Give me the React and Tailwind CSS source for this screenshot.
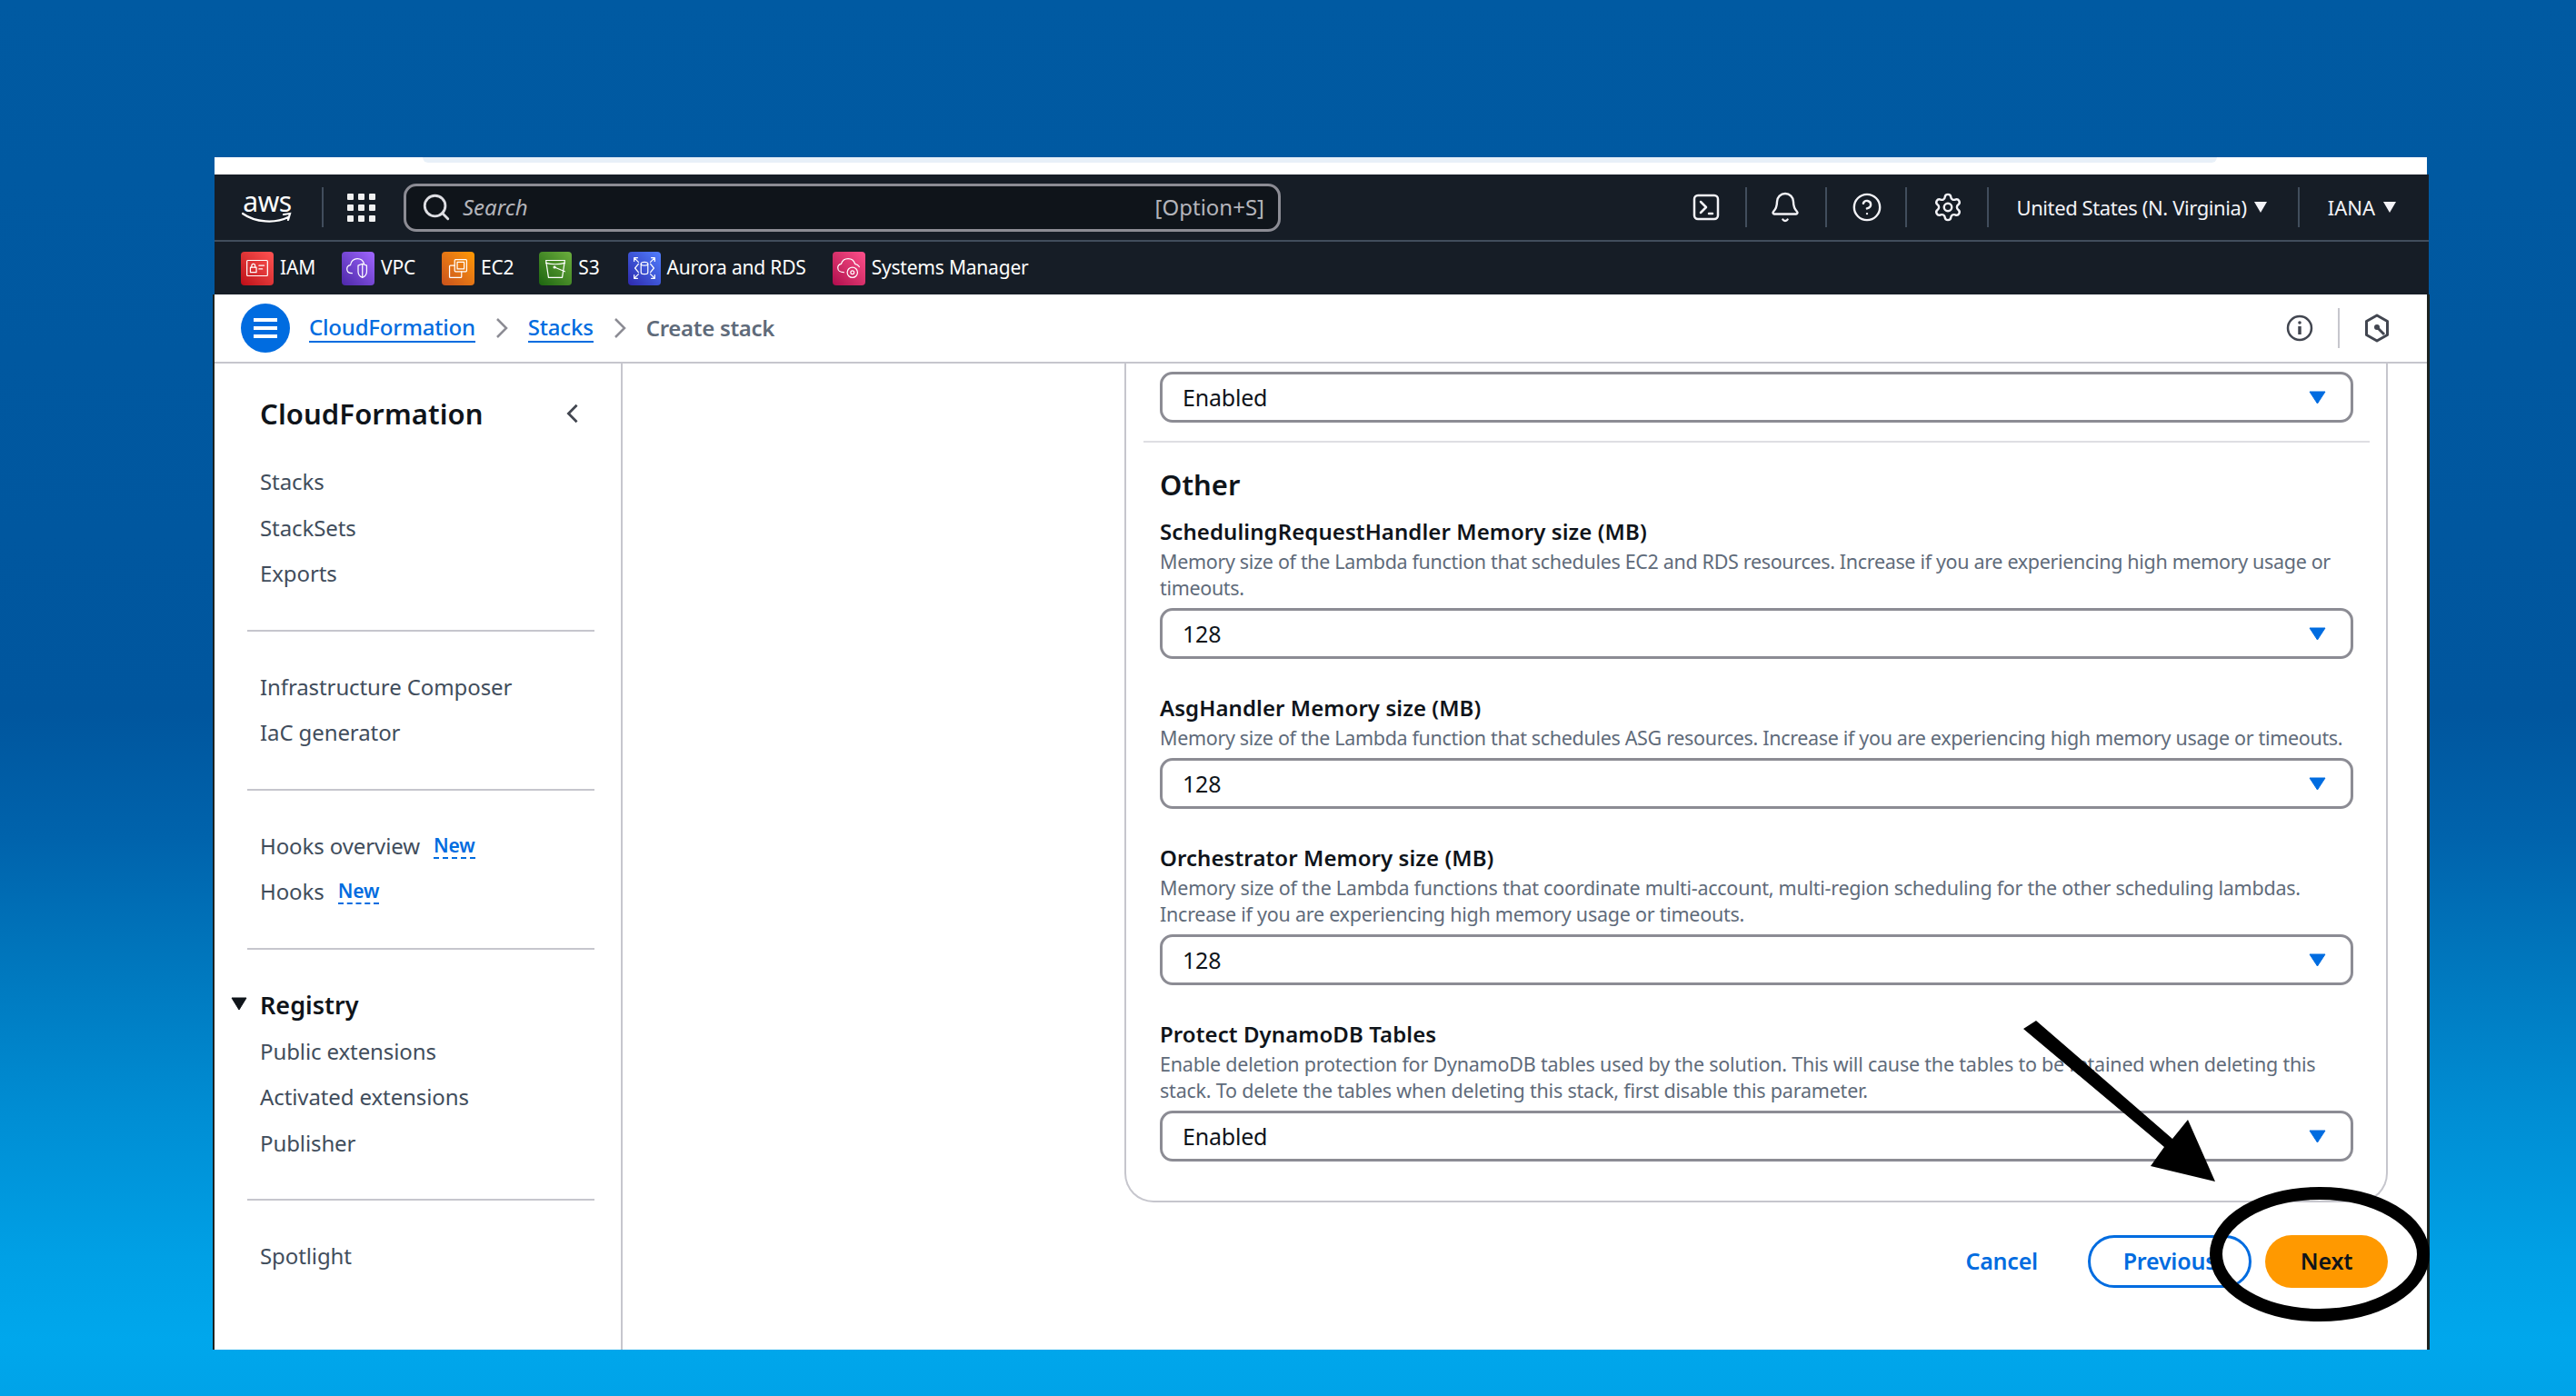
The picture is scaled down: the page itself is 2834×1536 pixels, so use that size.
import { Search, Bell, CircleHelp, Settings } from 'lucide-react';

const services = [
  { name: 'IAM', tile: 'from-[#bd0816] to-[#ff5252]', ml: 'ml-0', icon: 'iam' },
  { name: 'VPC', tile: 'from-[#4d27a8] to-[#a166ff]', ml: 'ml-[29px]', icon: 'vpc' },
  { name: 'EC2', tile: 'from-[#c8511b] to-[#ff9900]', ml: 'ml-[29px]', icon: 'ec2' },
  { name: 'S3', tile: 'from-[#1b660f] to-[#6cae3e]', ml: 'ml-[28px]', icon: 's3' },
  { name: 'Aurora and RDS', tile: 'from-[#2e27ad] to-[#527fff]', ml: 'ml-[31px]', icon: 'rds' },
  { name: 'Systems Manager', tile: 'from-[#b0084d] to-[#ff4f8b]', ml: 'ml-[29px]', icon: 'ssm' },
];

const TileIcon = ({ type }) => {
  const common = { fill: 'none', stroke: 'white', strokeWidth: 1.3, strokeLinejoin: 'round', strokeLinecap: 'round' };
  return (
    <svg viewBox="0 0 36 36" className="w-[34px] h-[34px]" {...common}>
      {type === 'iam' && (
        <>
          <rect x="6" y="9" width="24" height="18" rx="1" />
          <rect x="10" y="17" width="7" height="6" />
          <path d="M11.5 17v-2a2 2 0 0 1 4 0v2M20 15h6M20 19h4" />
        </>
      )}
      {type === 'vpc' && (
        <>
          <path d="M11 24c-4 0-6-2-6-5 0-2.500 1.500-4 4-4.500C9.500 10 13 7 17 7c4 0 7 2.500 8 6" />
          <path d="M18 15l5-2 5 2v7c0 4-2.500 6-5 7-2.500-1-5-3-5-7z" />
          <path d="M23 14v14" />
        </>
      )}
      {type === 'ec2' && (
        <>
          <rect x="14" y="8" width="14" height="14" rx="1" />
          <rect x="17" y="11" width="8" height="8" />
          <path d="M14 15H9a1 1 0 0 0-1 1v12a1 1 0 0 0 1 1h12a1 1 0 0 0 1-1v-6" />
        </>
      )}
      {type === 's3' && (
        <>
          <path d="M7 9h22l-3 20H10z" />
          <path d="M7 12c6 2 16 2 22 0" />
          <circle cx="17" cy="17" r="1" fill="white" />
          <path d="M17 17l12 5" />
        </>
      )}
      {type === 'rds' && (
        <>
          <ellipse cx="18" cy="13" rx="4" ry="2" />
          <path d="M14 13v10c0 1.200 2 2 4 2s4-.8 4-2V13" />
          <path d="M11 13l-4 5 4 5M25 13l4 5-4 5M6 6l5 5M6 6h4M6 6v4M30 6l-5 5M30 6h-4M30 6v4M6 30l5-5M6 30h4M6 30v-4M30 30l-5-5M30 30h-4M30 30v-4" />
        </>
      )}
      {type === 'ssm' && (
        <>
          <path d="M12 23c-4 0-7-2-7-5.500 0-2.500 1.500-4 4-4.500C10 9.500 13 7 17 7c4 0 7 2.500 8 6 2 .3 4 1.500 5 3.500" />
          <circle cx="22" cy="23" r="6" />
          <circle cx="22" cy="23" r="2" />
        </>
      )}
    </svg>
  );
};

const VDivider = ({ h = 'h-[44px]', color = 'bg-[#414d5c]' }) => <div className={`w-[2px] ${h} ${color}`} />;

const Caret = () => (
  <svg viewBox="0 0 19 14" className="w-[19px] h-[14px]">
    <path d="M1 1h17l-8.500 13z" fill="#006ce0" stroke="#006ce0" strokeLinejoin="round" />
  </svg>
);

const Select = ({ value }) => (
  <div className="flex items-center justify-between h-[56px] border-[3px] border-[#8c8c94] rounded-[14px] pl-[22px] pr-[27px]">
    <span className="text-[25px] leading-none text-[#0f141a] tracking-[-0.2px]">{value}</span>
    <Caret />
  </div>
);

const Field = ({ label, desc, value, track = 'tracking-[-0.33px]' }) => (
  <div className="mt-[38px] first:mt-0">
    <div className="h-[32px] leading-[32px] text-[24px] font-semibold text-[#0f141a] tracking-[0.08px]">{label}</div>
    <div className={`mt-[2px] mb-[8px] text-[21.5px] leading-[29px] text-[#5f6b7a] whitespace-nowrap ${track}`}>{desc}</div>
    <Select value={value} />
  </div>
);

const NavItem = ({ children }) => (
  <div className="flex items-center h-[50.5px] text-[24px] text-[#414d5c] tracking-[-0.1px]">{children}</div>
);

const NewBadge = () => (
  <span className="ml-[15px] text-[21px] font-semibold leading-[26px] text-[#006ce0] border-b-2 border-dashed border-[#006ce0]">New</span>
);

const SideRule = () => <div className="my-[36px] ml-[36px] mr-[29px] h-[2px] bg-[#c6c6cd]" />;

const Crumb = ({ children }) => (
  <span className="text-[24px] leading-[30px] font-medium text-[#006ce0] border-b-2 border-[#006ce0] tracking-[-0.2px]">{children}</span>
);

const CrumbChevron = () => (
  <svg viewBox="0 0 14 24" className="w-[14px] h-[24px] mx-[22px]" fill="none" stroke="#8c8c94" strokeWidth="2.500">
    <path d="M2 2l10 10L2 22" />
  </svg>
);

const App = () => {
  return (
    <div className="relative w-[2834px] h-[1536px] overflow-hidden pt-[173px] pl-[234px] bg-[linear-gradient(180deg,#005aa2_0%,#00569e_51%,#0063ac_60%,#0079bf_70%,#008ed4_80%,#00a0e5_90%,#00a7ec_96%,#00a3e8_100%)] font-['Noto_Sans',sans-serif]">
      <div className="flex flex-col w-[2439px] h-[1312px]">
        {/* Strip above the console */}
        <div className="h-[19px] ml-[2px] mr-[3px] bg-white">
          <div className="ml-[229px] mr-[231px] h-[6px] bg-[#e8f0f8] rounded-bl-[6px] rounded-br-[6px]" />
        </div>

        {/* Top nav */}
        <div className="bg-[#161d26] ml-[2px] mr-[1px]">
          <div className="flex items-center h-[74px] border-b-2 border-[#414d5c] pl-[30px] pr-[36px]">
            <div className="relative w-[56px] h-[36px] text-white">
              <span className="block text-[30px] leading-[24px] text-center tracking-[-0.5px]">aws</span>
              <svg viewBox="0 0 56 14" className="absolute left-0 bottom-0 w-[56px] h-[14px]" fill="none" stroke="white" strokeWidth="2.200" strokeLinecap="round">
                <path d="M1 3c14 10 36 11 50 4M46 4l7-1-2 7" />
              </svg>
            </div>
            <div className="ml-[32px]"><VDivider /></div>
            <div className="ml-[26px] grid grid-cols-3 gap-[5px]">
              {[...Array(9)].map((_, i) => <div key={i} className="w-[7px] h-[7px] bg-[#f0f0f0] rounded-[1px]" />)}
            </div>
            <div className="ml-[31px] flex items-center w-[965px] h-[53px] border-[3px] border-[#8c8c94] rounded-[14px] bg-[#0f141a] pl-[16px] pr-[15px]">
              <Search size={34} strokeWidth={2} className="text-[#dedee3]" />
              <span className="ml-[12px] text-[24px] italic text-[#b4b4bb]">Search</span>
              <span className="ml-auto text-[24px] text-[#b4b4bb]">[Option+S]</span>
            </div>

            <div className="ml-auto flex items-center text-[#f3f3f7]">
              <svg viewBox="0 0 30 30" className="w-[30px] h-[30px]" fill="none" stroke="currentColor" strokeWidth="2.500" strokeLinecap="round" strokeLinejoin="round">
                <rect x="2" y="2" width="26" height="26" rx="4" />
                <path d="M9 9l6 6-6 6M18 22h4" />
              </svg>
              <div className="ml-[28px]"><VDivider /></div>
              <Bell size={36} strokeWidth={1.6} className="ml-[24px]" />
              <div className="ml-[26px]"><VDivider /></div>
              <CircleHelp size={34} strokeWidth={1.7} className="ml-[27px]" />
              <div className="ml-[25px]"><VDivider /></div>
              <Settings size={34} strokeWidth={1.7} className="ml-[28px]" />
              <div className="ml-[26px]"><VDivider /></div>
              <span className="ml-[30px] text-[22px] tracking-[-0.4px]">United States (N. Virginia)</span>
              <span className="ml-[8px]"><svg viewBox="0 0 14 12" className="w-[14px] h-[12px]"><path d="M0 0h14L7 12z" fill="currentColor" /></svg></span>
              <div className="ml-[34px]"><VDivider /></div>
              <span className="ml-[31px] text-[22px]">IANA</span>
              <span className="ml-[9px]"><svg viewBox="0 0 14 12" className="w-[14px] h-[12px]"><path d="M0 0h14L7 12z" fill="currentColor" /></svg></span>
            </div>
          </div>
          <div className="flex items-center h-[58px] pl-[29px]">
            {services.map((s) => (
              <div key={s.name} className={`flex items-center ${s.ml}`}>
                <div className={`flex items-center justify-center w-[36px] h-[37px] rounded-[4px] bg-linear-to-tr ${s.tile}`}>
                  <TileIcon type={s.icon} />
                </div>
                <span className="ml-[7px] text-[21px] text-white tracking-[-0.2px]">{s.name}</span>
              </div>
            ))}
          </div>
        </div>

        {/* Breadcrumb bar and body */}
        <div className="flex-1 flex flex-col min-h-0 bg-white border-l-2 border-r-[3px] border-[#1c2320]">
          <div className="flex items-center h-[76px] shrink-0 border-b-2 border-[#c6c6cd] pl-[29px]">
            <div className="flex flex-col items-center justify-center gap-[5px] w-[54px] h-[54px] rounded-full bg-[#006ce0]">
              <div className="w-[26px] h-[4px] bg-white" />
              <div className="w-[26px] h-[4px] bg-white" />
              <div className="w-[26px] h-[4px] bg-white" />
            </div>
            <div className="ml-[21px] flex items-center">
              <Crumb>CloudFormation</Crumb>
              <CrumbChevron />
              <Crumb>Stacks</Crumb>
              <CrumbChevron />
              <span className="text-[24px] font-semibold text-[#5f6b7a] tracking-[-0.3px]">Create stack</span>
            </div>
            <div className="ml-auto flex items-center pr-[41px] text-[#424650]">
              <svg viewBox="0 0 30 30" className="w-[30px] h-[30px]" fill="none" stroke="currentColor" strokeWidth="2.500">
                <circle cx="15" cy="15" r="13" />
                <path d="M15 13v9" strokeWidth="3.500" />
                <circle cx="15" cy="9" r="1.800" fill="currentColor" stroke="none" />
              </svg>
              <div className="ml-[27px]"><VDivider h="h-[44px]" color="bg-[#c6c6cd]" /></div>
              <svg viewBox="0 0 28 32" className="ml-[27px] w-[28px] h-[32px]" fill="none" stroke="currentColor" strokeWidth="3" strokeLinejoin="round">
                <path d="M14 2l11.500 6.500v15L14 30 2.500 23.500v-15z" />
                <circle cx="14" cy="15" r="3" fill="currentColor" stroke="none" />
                <path d="M14 15l8 8" />
              </svg>
            </div>
          </div>

          <div className="flex flex-1 min-h-0">
            {/* Side navigation */}
            <aside className="w-[449px] shrink-0 border-r-2 border-[#c6c6cd]">
              <div className="flex items-center justify-between h-[40px] mt-[35px] pl-[50px] pr-[46px]">
                <span className="text-[31px] font-semibold text-[#0f141a] tracking-[0.1px]">CloudFormation</span>
                <svg viewBox="0 0 14 24" className="w-[14px] h-[22px]" fill="none" stroke="#424650" strokeWidth="3">
                  <path d="M12 2L2 12l10 10" />
                </svg>
              </div>
              <div className="mt-[30px] pl-[50px]">
                <NavItem>Stacks</NavItem>
                <NavItem>StackSets</NavItem>
                <NavItem>Exports</NavItem>
              </div>
              <SideRule />
              <div className="pl-[50px]">
                <NavItem>Infrastructure Composer</NavItem>
                <NavItem>IaC generator</NavItem>
              </div>
              <SideRule />
              <div className="pl-[50px]">
                <NavItem>Hooks overview<NewBadge /></NavItem>
                <NavItem>Hooks<NewBadge /></NavItem>
              </div>
              <SideRule />
              <div className="pl-[50px]">
                <div className="relative flex items-center h-[51px] text-[27px] font-semibold text-[#0f141a]">
                  <svg viewBox="0 0 18 15" className="absolute left-[-32px] top-[16px] w-[18px] h-[15px]">
                    <path d="M1 1h16L9 14z" fill="#0f141a" stroke="#0f141a" strokeLinejoin="round" />
                  </svg>
                  Registry
                </div>
                <NavItem>Public extensions</NavItem>
                <NavItem>Activated extensions</NavItem>
                <NavItem>Publisher</NavItem>
              </div>
              <SideRule />
              <div className="pl-[50px]">
                <NavItem>Spotlight</NavItem>
              </div>
            </aside>

            {/* Form */}
            <main className="flex-1 min-w-0 pl-[552px] pr-[43px]">
              <div className="border-l-2 border-r-2 border-b-2 border-[#c6c6cd] rounded-b-[32px] pt-[9px] pl-[37px] pr-[36px] pb-[43px]">
                <Select value="Enabled" />
                <div className="mt-[20px] -mx-[18px] h-[2px] bg-[#dedee3]" />
                <h2 className="mt-[26px] mb-[16px] h-[40px] leading-[40px] text-[31px] font-semibold text-[#0f141a]">Other</h2>
                <div>
                  <Field
                    label="SchedulingRequestHandler Memory size (MB)"
                    desc={<>Memory size of the Lambda function that schedules EC2 and RDS resources. Increase if you are experiencing high memory usage or<br />timeouts.</>}
                    value="128"
                  />
                  <Field
                    label="AsgHandler Memory size (MB)"
                    desc="Memory size of the Lambda function that schedules ASG resources. Increase if you are experiencing high memory usage or timeouts."
                    value="128"
                  />
                  <Field
                    label="Orchestrator Memory size (MB)"
                    desc={<>Memory size of the Lambda functions that coordinate multi-account, multi-region scheduling for the other scheduling lambdas.<br />Increase if you are experiencing high memory usage or timeouts.</>}
                    value="128"
                    track="tracking-[-0.25px]"
                  />
                  <Field
                    label="Protect DynamoDB Tables"
                    desc={<>Enable deletion protection for DynamoDB tables used by the solution. This will cause the tables to be retained when deleting this<br />stack. To delete the tables when deleting this stack, first disable this parameter.</>}
                    value="Enabled"
                    track="tracking-[-0.21px]"
                  />
                </div>
              </div>
              <div className="mt-[36px] flex items-center justify-end">
                <span className="text-[25px] font-semibold text-[#006ce0] tracking-[-0.2px]">Cancel</span>
                <div className="ml-[55px] flex items-center justify-center w-[180px] h-[58px] border-[3px] border-[#006ce0] rounded-full text-[25px] font-semibold text-[#006ce0] tracking-[-0.2px]">Previous</div>
                <div className="ml-[15px] flex items-center justify-center w-[135px] h-[58px] rounded-full bg-[#ff9900] text-[25px] font-semibold text-[#0f141a] tracking-[-0.2px]">Next</div>
              </div>
            </main>
          </div>
        </div>
      </div>

      {/* Hand drawn annotation over the page */}
      <svg viewBox="0 0 2834 1536" className="absolute inset-0 w-[2834px] h-[1536px] pointer-events-none">
        <polygon points="2226,1132 2240,1123 2390,1253 2407,1232 2437,1300 2366,1283 2381,1262" fill="#000" />
        <ellipse cx="2552" cy="1380" rx="114" ry="67" fill="none" stroke="#000" strokeWidth="14" />
      </svg>
    </div>
  );
};

export default App;
